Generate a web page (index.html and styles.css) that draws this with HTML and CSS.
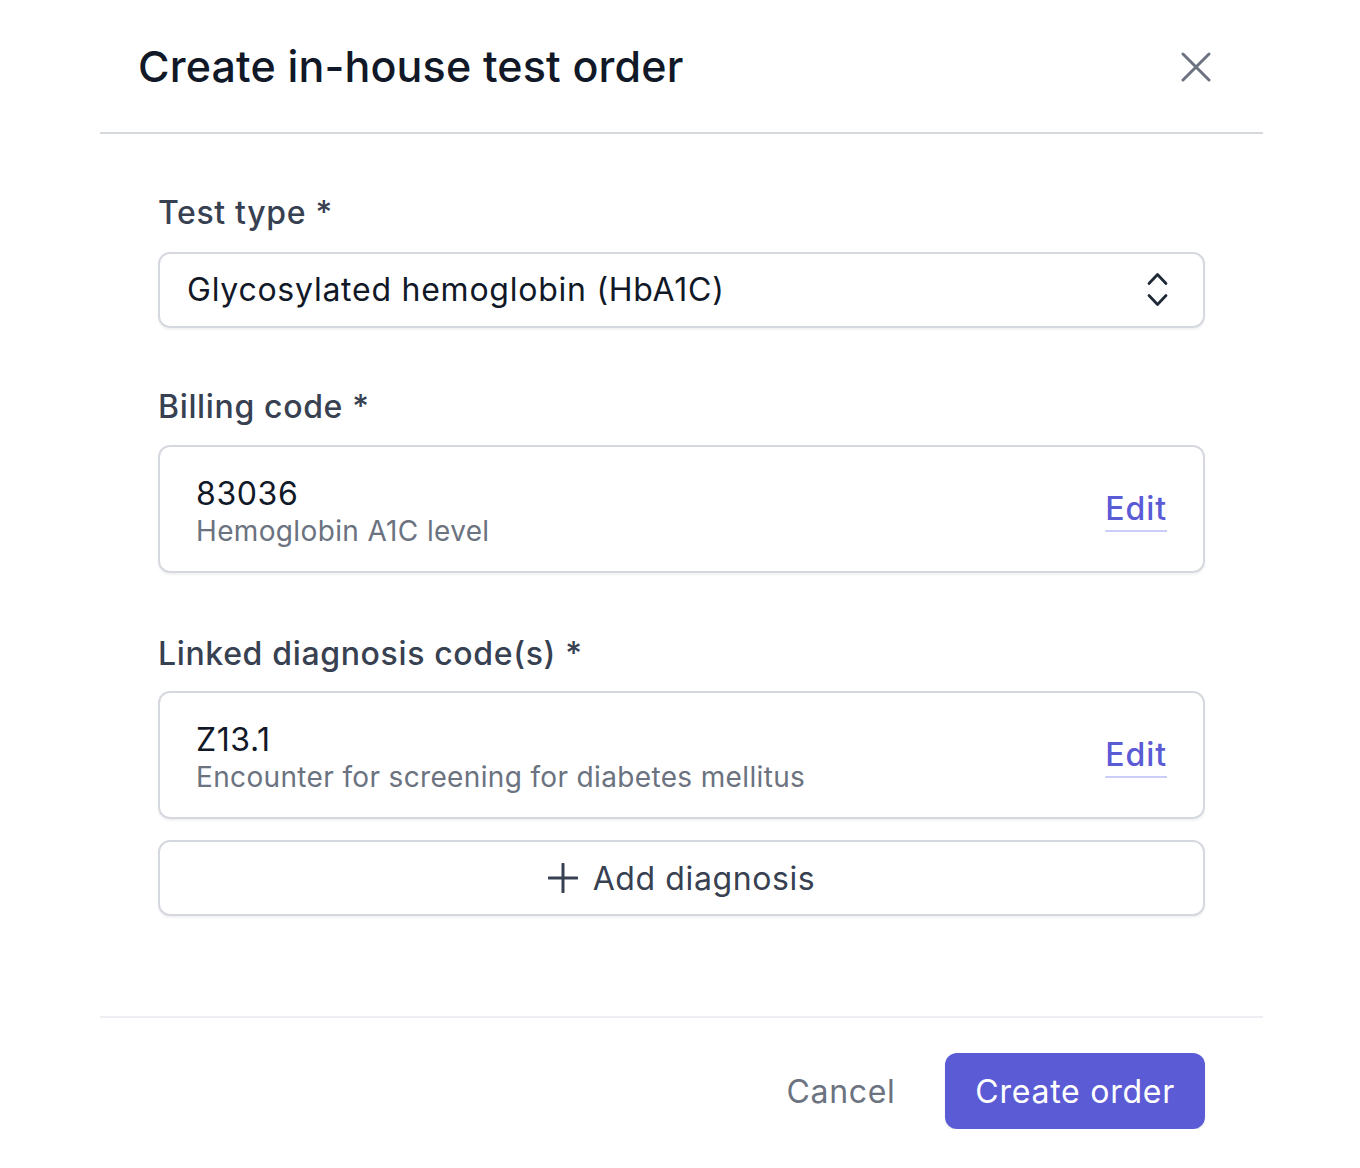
FILE: index.html
```html
<!DOCTYPE html>
<html lang="en">
<head>
<meta charset="utf-8">
<title>Create in-house test order</title>
<link rel="stylesheet" href="styles.css">
</head>
<body>
<div class="dialog">
  <div class="header">
    <h1 class="title">Create in-house test order</h1>
    <button class="close" aria-label="Close">
      <svg width="30" height="30" viewBox="0 0 30 30" fill="none" stroke="#6b7280" stroke-width="3" stroke-linecap="round"><path d="M2 2 L28 28 M28 2 L2 28"/></svg>
    </button>
  </div>
  <div class="body">
    <div class="field">
      <label class="label">Test type *</label>
      <div class="select">
        <span>Glycosylated hemoglobin (HbA1C)</span>
        <svg class="chev" width="21" height="36" viewBox="0 0 21 36" fill="none" stroke="#1f2937" stroke-width="2.8" stroke-linecap="round" stroke-linejoin="round"><path d="M2 11.5 L10.5 2.5 L19 11.5"/><path d="M2 23.5 L10.5 32.5 L19 23.5"/></svg>
      </div>
    </div>
    <div class="field">
      <label class="label">Billing code *</label>
      <div class="card">
        <div class="card-text">
          <div class="code">83036</div>
          <div class="desc">Hemoglobin A1C level</div>
        </div>
        <a class="edit" href="#">Edit</a>
      </div>
    </div>
    <div class="field field-diag">
      <label class="label">Linked diagnosis code(s) *</label>
      <div class="card">
        <div class="card-text">
          <div class="code">Z13.1</div>
          <div class="desc">Encounter for screening for diabetes mellitus</div>
        </div>
        <a class="edit" href="#">Edit</a>
      </div>
      <button class="add">
        <svg width="30" height="30" viewBox="0 0 30 30" fill="none" stroke="#374151" stroke-width="3" stroke-linecap="round"><path d="M15 1 V29 M1 15 H29"/></svg>
        <span>Add diagnosis</span>
      </button>
    </div>
  </div>
  <div class="footer">
    <button class="cancel">Cancel</button>
    <button class="primary">Create order</button>
  </div>
</div>
</body>
</html>
```
FILE: styles.css
```css
* { box-sizing: border-box; }
html, body { margin: 0; padding: 0; background: #ffffff; }
body {
  font-family: Inter, "Noto Sans", "Liberation Sans", sans-serif;
  color: #111827;
  -webkit-font-smoothing: antialiased;
}
button { font-family: inherit; }

.dialog {
  margin-left: 100px;
  width: 1163px;
}

.header {
  height: 134px;
  border-bottom: 2px solid #d5d8dd;
  display: flex;
  align-items: center;
  justify-content: space-between;
  padding: 0 52px 0 38px;
}
.title {
  margin: 0;
  font-size: 43px;
  font-weight: 500;
  line-height: 56px;
  color: #111827;
  letter-spacing: 0.15px;
}
.close {
  border: none;
  background: none;
  padding: 0;
  width: 30px;
  height: 30px;
  display: flex;
  margin-top: 2px;
}

.body {
  padding: 55px 58px 100px 58px;
}
.field + .field { margin-top: 55px; }
.field-diag { margin-top: 57px !important; }
.label {
  display: block;
  font-size: 32px;
  line-height: 48px;
  font-weight: 500;
  color: #374151;
  margin-bottom: 14px;
  letter-spacing: 0.65px;
}
.field:first-child .label { margin-bottom: 15px; }
.field-diag .label { margin-bottom: 13px; }

.select {
  height: 76px;
  border: 2px solid #d5d8de;
  border-radius: 12px;
  box-shadow: 0 2px 2px rgba(17, 24, 39, 0.05);
  display: flex;
  align-items: center;
  justify-content: space-between;
  padding: 0 35px 0 27px;
  font-size: 32px;
  line-height: 48px;
  color: #111827;
  letter-spacing: 0.75px;
}
.chev { display: block; }

.card {
  height: 128px;
  border: 2px solid #d5d8de;
  border-radius: 12px;
  box-shadow: 0 2px 2px rgba(17, 24, 39, 0.05);
  display: flex;
  align-items: center;
  justify-content: space-between;
  padding: 0 36px;
}
.card-text { padding-top: 4px; }
.code {
  font-size: 32px;
  line-height: 40px;
  color: #111827;
  letter-spacing: 0.6px;
}
.desc {
  font-size: 28px;
  line-height: 34px;
  color: #6b7280;
  letter-spacing: 0.35px;
}
.edit {
  font-size: 32px;
  line-height: 40px;
  color: #5b5bd6;
  text-decoration: underline;
  text-decoration-color: #c9cdf7;
  text-decoration-thickness: 2px;
  text-underline-offset: 10px;
  font-weight: 500;
  letter-spacing: 0.9px;
}

.add {
  margin-top: 21px;
  width: 100%;
  height: 76px;
  border: 2px solid #d5d8de;
  border-radius: 12px;
  background: #ffffff;
  box-shadow: 0 2px 2px rgba(17, 24, 39, 0.05);
  display: flex;
  align-items: center;
  justify-content: center;
  gap: 15px;
  font-size: 32px;
  color: #374151;
  padding: 0;
  letter-spacing: 0.6px;
}

.footer {
  border-top: 2px solid #eceef1;
  display: flex;
  justify-content: flex-end;
  align-items: center;
  gap: 26px;
  padding: 35px 58px 0 0;
}
.cancel {
  border: none;
  background: none;
  font-size: 32px;
  color: #6b7280;
  padding: 0 24px;
  height: 76px;
  letter-spacing: 0.65px;
}
.primary {
  border: none;
  background: #5b5bd6;
  color: #ffffff;
  font-size: 32px;
  height: 76px;
  padding: 0 30px;
  border-radius: 12px;
  box-shadow: 0 2px 2px rgba(17, 24, 39, 0.08);
  letter-spacing: 0.75px;
}
```
